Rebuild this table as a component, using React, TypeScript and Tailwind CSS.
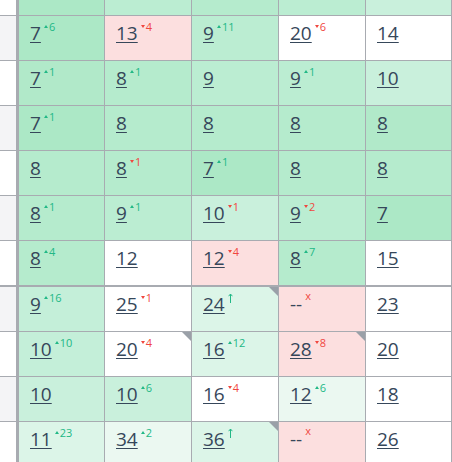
import React from 'react';

type Cell = {
  v: string;
  d?: string;
  bg: string;
  corner?: boolean;
};

const W = 'bg-white';
const PINK = 'bg-[#fcdfdf]';
const G1 = 'bg-[#ace8c6]';
const G2 = 'bg-[#b1e9c9]';
const G3 = 'bg-[#b5ebcd]';
const G4 = 'bg-[#bbedd2]';
const G5 = 'bg-[#c4efd9]';
const G6 = 'bg-[#c9f0dc]';
const G7 = 'bg-[#dcf5e8]';
const G8 = 'bg-[#ebf8f1]';

const topRow = [G1, G4, G3, G4, G6];

const rows: Cell[][] = [
  [
    { v: '7', d: '+6', bg: G1 },
    { v: '13', d: '-4', bg: PINK },
    { v: '9', d: '+11', bg: G4 },
    { v: '20', d: '-6', bg: W },
    { v: '14', bg: W },
  ],
  [
    { v: '7', d: '+1', bg: G2 },
    { v: '8', d: '+1', bg: G3 },
    { v: '9', bg: G4 },
    { v: '9', d: '+1', bg: G4 },
    { v: '10', bg: G6 },
  ],
  [
    { v: '7', d: '+1', bg: G1 },
    { v: '8', bg: G3 },
    { v: '8', bg: G3 },
    { v: '8', bg: G3 },
    { v: '8', bg: G2 },
  ],
  [
    { v: '8', bg: G3 },
    { v: '8', d: '-1', bg: G3 },
    { v: '7', d: '+1', bg: G1 },
    { v: '8', bg: G3 },
    { v: '8', bg: G3 },
  ],
  [
    { v: '8', d: '+1', bg: G3 },
    { v: '9', d: '+1', bg: G4 },
    { v: '10', d: '-1', bg: G6 },
    { v: '9', d: '-2', bg: G4 },
    { v: '7', bg: G1 },
  ],
  [
    { v: '8', d: '+4', bg: G3 },
    { v: '12', bg: W },
    { v: '12', d: '-4', bg: PINK },
    { v: '8', d: '+7', bg: G3 },
    { v: '15', bg: W },
  ],
  [
    { v: '9', d: '+16', bg: G5 },
    { v: '25', d: '-1', bg: W },
    { v: '24', d: 'up', bg: G7, corner: true },
    { v: '--', d: 'x', bg: PINK },
    { v: '23', bg: W },
  ],
  [
    { v: '10', d: '+10', bg: G5 },
    { v: '20', d: '-4', bg: W, corner: true },
    { v: '16', d: '+12', bg: G7 },
    { v: '28', d: '-8', bg: PINK, corner: true },
    { v: '20', bg: W },
  ],
  [
    { v: '10', bg: G6 },
    { v: '10', d: '+6', bg: G6 },
    { v: '16', d: '-4', bg: W },
    { v: '12', d: '+6', bg: G8 },
    { v: '18', bg: W },
  ],
  [
    { v: '11', d: '+23', bg: G7 },
    { v: '34', d: '+2', bg: G8 },
    { v: '36', d: 'up', bg: G7, corner: true },
    { v: '--', d: 'x', bg: PINK },
    { v: '26', bg: W },
  ],
];

const colWidths = ['w-[89px] border-l-[3px]', 'w-[87px]', 'w-[87px]', 'w-[87px]', 'flex-1'];

function Delta({ d }: { d: string }) {
  if (d === 'up') {
    return (
      <svg width="5" height="10" viewBox="0 0 5 10" className="ml-[3px] mt-[1px]">
        <path d="M2.5 10V1.2M0.6 3.2L2.5 1L4.4 3.2" stroke="#22b886" strokeWidth="1" fill="none" />
      </svg>
    );
  }
  if (d === 'x') {
    return <span className="ml-[3px] -mt-[2px] text-[11px] leading-[11px] text-[#f0473f]">x</span>;
  }
  const up = d.startsWith('+');
  return (
    <span className={`ml-[3px] flex items-start text-[11px] leading-[11px] ${up ? 'text-[#22b886]' : 'text-[#f0473f]'}`}>
      <svg width="4" height="3" viewBox="0 0 4 3" className="mt-[4px] mr-[1px]">
        {up ? <path d="M0 3L2 0L4 3Z" fill="#22b886" /> : <path d="M0 0L4 0L2 3Z" fill="#f0473f" />}
      </svg>
      {d.slice(1)}
    </span>
  );
}

function DataCell({ cell, width }: { cell: Cell; width: string }) {
  return (
    <div className={`relative h-full border-r border-[#a8abb1] pl-[11px] pt-[4px] ${width} ${cell.bg}`}>
      <div className="flex items-start">
        <span
          className={`text-[19px] leading-[26px] text-[#36475a] ${cell.v === '--' ? '' : 'underline decoration-1 underline-offset-[2px]'}`}
        >
          {cell.v}
        </span>
        {cell.d && (
          <span className="mt-[1px] flex items-start">
            <Delta d={cell.d} />
          </span>
        )}
      </div>
      {cell.corner && (
        <div className="absolute right-0 top-0 h-0 w-0 border-l-[9px] border-t-[9px] border-l-transparent border-t-[#9aa0a8]" />
      )}
    </div>
  );
}

export default function App() {
  return (
    <div
      className="w-[452px] h-[462px] overflow-hidden bg-white"
      style={{ fontFamily: '"Open Sans", "Liberation Sans", sans-serif' }}
    >
      <div className="flex h-[16px] border-b border-[#a8abb1]">
        <div className="w-[16px] bg-white" />
        {topRow.map((bg, i) => (
          <div key={i} className={`h-full border-r border-[#a8abb1] ${colWidths[i]} ${bg}`} />
        ))}
      </div>
      {rows.map((row, r) => (
        <div
          key={r}
          className={`flex h-[45px] ${r === 5 ? 'h-[46px] border-b-2' : 'border-b'} border-[#a8abb1]`}
        >
          <div className={`w-[16px] ${r % 2 === 0 ? 'bg-[#f4f4f6]' : 'bg-white'}`} />
          {row.map((cell, c) => (
            <DataCell key={c} cell={cell} width={colWidths[c]} />
          ))}
        </div>
      ))}
    </div>
  );
}
